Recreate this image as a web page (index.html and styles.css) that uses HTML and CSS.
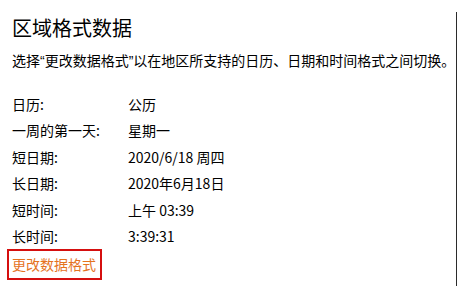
FILE: index.html
```html
<!DOCTYPE html>
<html lang="zh-CN">
<head>
<meta charset="utf-8">
<link rel="stylesheet" href="styles.css">
</head>
<body>
<div class="page">
  <main class="content">
    <h1 class="title">区域格式数据</h1>
    <p class="desc">选择<span class="q">“</span>更改数据格式<span class="q">”</span>以在地区所支持的日历、日期和时间格式之间切换。</p>
    <div class="rows">
      <div class="row"><span class="label">日历:</span><span class="value">公历</span></div>
      <div class="row"><span class="label">一周的第一天:</span><span class="value">星期一</span></div>
      <div class="row"><span class="label">短日期:</span><span class="value">2020/6/18 周四</span></div>
      <div class="row"><span class="label">长日期:</span><span class="value">2020年6月18日</span></div>
      <div class="row"><span class="label">短时间:</span><span class="value">上午 03:39</span></div>
      <div class="row"><span class="label">长时间:</span><span class="value">3:39:31</span></div>
    </div>
    <a class="change-link" href="#">更改数据格式</a>
  </main>
  <div class="edge"></div>
</div>
</body>
</html>
```
FILE: styles.css
```css
html, body {
  margin: 0;
  padding: 0;
  background: #ffffff;
}
body {
  font-family: "Noto Sans CJK SC", "Noto Sans", sans-serif;
  color: #000000;
  width: 459px;
  height: 294px;
  overflow: hidden;
}
.page {
  display: flex;
  height: 294px;
}
.content {
  flex: 1;
  min-width: 0;
  padding: 14px 0 0 12px;
  display: flex;
  flex-direction: column;
  align-items: flex-start;
}
.title {
  margin: 0;
  font-size: 20px;
  line-height: 28px;
  font-weight: normal;
}
.desc {
  margin: 8px 0 0 0;
  font-size: 14px;
  line-height: 20px;
  white-space: nowrap;
  letter-spacing: 0;
}
.q {
  font-family: "Liberation Sans", sans-serif;
}
.rows {
  margin-top: 19.5px;
  display: flex;
  flex-direction: column;
}
.row {
  display: flex;
  font-size: 14px;
  line-height: 26.5px;
  height: 26.5px;
}
.label {
  width: 116px;
}
.value {
  white-space: nowrap;
}
.change-link {
  margin-left: -5px;
  margin-top: -0.5px;
  border: 2px solid #d50f0f;
  padding: 0 4px 0 3px;
  height: 27px;
  line-height: 27px;
  font-size: 14px;
  color: #e5731f;
  text-decoration: none;
}
.edge {
  width: 1px;
  margin: 12px 2px 8px 0;
  background: #2b2b2b;
}
```
